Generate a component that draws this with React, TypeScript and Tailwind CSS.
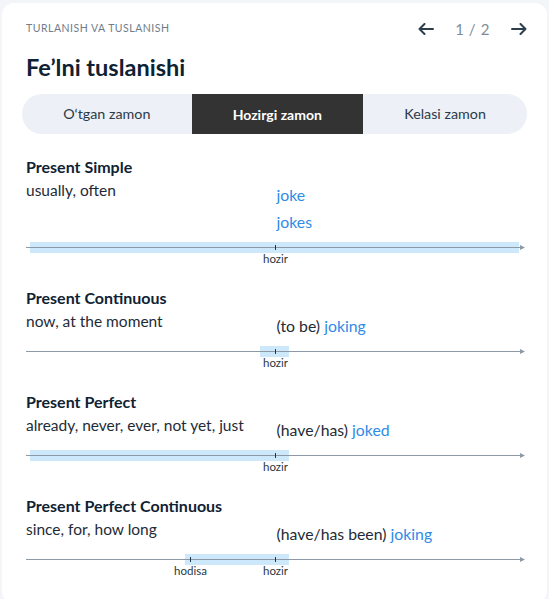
import React from 'react';

type Mark = { at: number; label: string };

type Tense = {
  title: string;
  markers: string;
  forms: { aux?: string; verb: string }[];
  band: [number, number]; // px within timeline
  marks: Mark[];
};

const TENSES: Tense[] = [
  {
    title: 'Present Simple',
    markers: 'usually, often',
    forms: [{ verb: 'joke' }, { verb: 'jokes' }],
    band: [4, 493],
    marks: [{ at: 249, label: 'hozir' }],
  },
  {
    title: 'Present Continuous',
    markers: 'now, at the moment',
    forms: [{ aux: '(to be)', verb: 'joking' }],
    band: [234, 263],
    marks: [{ at: 249, label: 'hozir' }],
  },
  {
    title: 'Present Perfect',
    markers: 'already, never, ever, not yet, just',
    forms: [{ aux: '(have/has)', verb: 'joked' }],
    band: [4, 263],
    marks: [{ at: 249, label: 'hozir' }],
  },
  {
    title: 'Present Perfect Continuous',
    markers: 'since, for, how long',
    forms: [{ aux: '(have/has been)', verb: 'joking' }],
    band: [159, 263],
    marks: [
      { at: 164, label: 'hodisa' },
      { at: 249, label: 'hozir' },
    ],
  },
];

const TABS = ['O‘tgan zamon', 'Hozirgi zamon', 'Kelasi zamon'];

function Timeline({ band, marks }: { band: [number, number]; marks: Mark[] }) {
  return (
    <div className="relative h-[24px] w-[499px]">
      {/* highlighted span */}
      <div
        className="absolute top-0 h-[11px] bg-[#cce8fa]"
        style={{ left: band[0], width: band[1] - band[0] }}
      />
      {/* axis */}
      <div className="absolute left-0 right-[2px] top-[5px] h-px bg-[#8d9aa6]" />
      <svg className="absolute right-0 top-[3px]" width="5" height="5" viewBox="0 0 5 5">
        <path d="M0 0 L5 2.5 L0 5 Z" fill="#8d9aa6" />
      </svg>
      {marks.map((m) => (
        <React.Fragment key={m.label}>
          <div className="absolute top-[3px] h-[5px] w-px bg-[#1f3446]" style={{ left: m.at }} />
          <span
            className="absolute top-[10px] -translate-x-1/2 text-[11.5px] leading-[14px] text-[#2a3744]"
            style={{ left: m.at + 0.5 }}
          >
            {m.label}
          </span>
        </React.Fragment>
      ))}
    </div>
  );
}

function TenseBlock({ tense }: { tense: Tense }) {
  return (
    <div className="flex flex-col">
      <h3 className="text-[16px] font-bold leading-[20px] text-[#0f2233]">{tense.title}</h3>
      <div className="grid grid-cols-2">
        <p className="text-[15.5px] leading-[26px] text-[#1e2b37]">{tense.markers}</p>
        <div className="mt-[4px] flex flex-col">
          {tense.forms.map((f) => (
            <p key={f.verb} className="text-[15.8px] leading-[27px] text-[#1e2b37]">
              {f.aux && <span>{f.aux} </span>}
              <span className="text-[#2f8ae8]">{f.verb}</span>
            </p>
          ))}
        </div>
      </div>
      <div className="mt-[7px]">
        <Timeline band={tense.band} marks={tense.marks} />
      </div>
    </div>
  );
}

export default function App() {
  return (
    <div
      className="min-h-screen bg-[#f3f5f9] px-[2px] pb-[2px] pt-[3px]"
      style={{ fontFamily: 'Lato, "Noto Sans", sans-serif' }}
    >
      <div className="rounded-xl bg-white px-5 pb-[25px] pt-[16px]">
        {/* Header */}
        <div className="flex h-5 items-center justify-between pl-1">
          <span className="text-[10.5px] tracking-[0.5px] text-[#6f7c89]">TURLANISH VA TUSLANISH</span>
          <div className="flex items-center gap-[21px] text-[#2c3e4c]">
            <svg width="16" height="12" viewBox="0 0 16 12" fill="none" stroke="currentColor" strokeWidth="2" strokeLinecap="round" strokeLinejoin="round">
              <path d="M15 6H1.5M6.5 1L1.5 6l5 5" />
            </svg>
            <span className="text-[15px] tracking-[0.6px] text-[#7f8d9a]">1 / 2</span>
            <svg width="16" height="12" viewBox="0 0 16 12" fill="none" stroke="currentColor" strokeWidth="2" strokeLinecap="round" strokeLinejoin="round">
              <path d="M1 6h13.5M9.5 1l5 5-5 5" />
            </svg>
          </div>
        </div>

        <h1 className="mt-[14px] pl-1 text-[23.5px] font-bold leading-[28px] text-[#0e2233]">Fe’lni tuslanishi</h1>

        {/* Tabs */}
        <div className="mt-[13px] flex h-10 overflow-hidden rounded-full bg-[#edf0f6]">
          {TABS.map((t, i) => (
            <button
              key={t}
              className={
                i === 1
                  ? 'flex-auto bg-[#333333] text-[14px] font-bold text-white'
                  : 'flex-auto text-[14.3px] text-[#2b3a48]'
              }
            >
              {t}
            </button>
          ))}
        </div>

        {/* Tenses */}
        <div className="mt-[23px] flex flex-col gap-[22px] pl-1">
          {TENSES.map((t) => (
            <TenseBlock key={t.title} tense={t} />
          ))}
        </div>
      </div>
    </div>
  );
}
